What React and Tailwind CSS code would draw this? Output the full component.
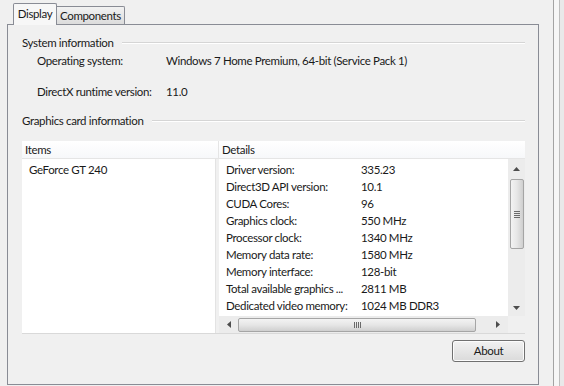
import React from "react";

const details = [
  ["Driver version:", "335.23"],
  ["Direct3D API version:", "10.1"],
  ["CUDA Cores:", "96"],
  ["Graphics clock:", "550 MHz"],
  ["Processor clock:", "1340 MHz"],
  ["Memory data rate:", "1580 MHz"],
  ["Memory interface:", "128-bit"],
  ["Total available graphics ...", "2811 MB"],
  ["Dedicated video memory:", "1024 MB DDR3"],
];

function GroupTitle({ children }) {
  return (
    <div className="flex h-[16px] items-center gap-[8px]">
      <span className="whitespace-nowrap">{children}</span>
      <div className="flex-1 border-t border-b border-t-[#d5d5d5] border-b-white" />
    </div>
  );
}

function Arrow({ dir }) {
  const paths = {
    up: "M0 4 L3.5 0 L7 4 Z",
    down: "M0 0 L7 0 L3.5 4 Z",
    left: "M4 0 L4 7 L0 3.5 Z",
    right: "M0 0 L4 3.5 L0 7 Z",
  };
  const vertical = dir === "up" || dir === "down";
  return (
    <svg width={vertical ? 7 : 4} height={vertical ? 4 : 7} viewBox={vertical ? "0 0 7 4" : "0 0 4 7"}>
      <path d={paths[dir]} fill="#4d4d4d" />
    </svg>
  );
}

export default function App() {
  return (
    <div className="flex h-[386px] w-[564px] overflow-hidden bg-[#f0f0f0] font-['Lato','Liberation_Sans',sans-serif] text-[11.5px] leading-none tracking-[-0.35px] text-[#1a1a1a]">
      {/* dialog body */}
      <div className="flex w-[553px] flex-col pl-[7px] pr-[14px]">
        {/* tabs */}
        <div className="relative z-10 flex h-[24px] items-end pl-[6px]">
          <div className="mb-[-1px] flex h-[22px] w-[44px] items-center justify-center rounded-t-[2px] border border-b-0 border-[#898c95] bg-[#f7f7f7] pb-[2px]">
            Display
          </div>
          <div className="flex h-[18px] w-[68px] items-center justify-center rounded-tr-[2px] border border-l-0 border-b-0 border-[#898c95] bg-gradient-to-b from-[#f2f2f2] to-[#dcdcdc]">
            Components
          </div>
        </div>

        {/* tab panel */}
        <div className="flex h-[361px] flex-col border border-[#898c95] bg-[#f0f0f0] pl-[14px] pr-[13px] pt-[10px]">
          <GroupTitle>System information</GroupTitle>
          <div className="mt-[2px] flex h-[16px] items-center pl-[15px]">
            <span className="w-[129px]">Operating system:</span>
            <span>Windows 7 Home Premium, 64-bit (Service Pack 1)</span>
          </div>
          <div className="mt-[15px] flex h-[16px] items-center pl-[15px]">
            <span className="w-[129px]">DirectX runtime version:</span>
            <span>11.0</span>
          </div>

          <div className="mt-[13px]">
            <GroupTitle>Graphics card information</GroupTitle>
          </div>

          {/* list views */}
          <div className="mt-[12px] flex h-[193px] flex-col border-b border-[#d9d9d9]">
            <div className="flex h-[18px] border-b border-[#e5e5e5] bg-gradient-to-b from-white to-[#f7f8fa]">
              <div className="flex w-[197px] items-center border-r border-[#e5e5e5] pl-[3px]">Items</div>
              <div className="flex flex-1 items-center pl-[3px]">Details</div>
            </div>
            <div className="flex min-h-0 flex-1">
              <div className="w-[193px] bg-white pl-[7px] pt-[4px]">
                <div className="flex h-[13px] items-center">GeForce GT 240</div>
              </div>
              <div className="w-[4px] border-l border-[#e3e3e3] bg-[#f0f0f0]" />
              <div className="flex flex-1 flex-col">
                <div className="flex min-h-0 flex-1">
                  <div className="flex-1 overflow-hidden bg-white pl-[7px] pt-[2px]">
                    {details.map(([k, v]) => (
                      <div key={k} className="flex h-[17px] items-center whitespace-nowrap">
                        <span className="w-[135px] shrink-0">{k}</span>
                        <span>{v}</span>
                      </div>
                    ))}
                  </div>
                  {/* vertical scrollbar */}
                  <div className="flex w-[17px] flex-col items-center bg-[#ececec]">
                    <div className="flex h-[20px] items-center justify-center">
                      <Arrow dir="up" />
                    </div>
                    <div className="flex h-[70px] w-[14px] items-center justify-center rounded-[2px] border border-[#a5a5a5] bg-gradient-to-r from-[#f3f3f3] via-[#e6e6e6] to-[#cfcfcf]">
                      <div className="flex flex-col gap-[1px]">
                        <div className="h-px w-[6px] bg-[#6a6a6a]" />
                        <div className="h-px w-[6px] bg-[#6a6a6a]" />
                        <div className="h-px w-[6px] bg-[#6a6a6a]" />
                        <div className="h-px w-[6px] bg-[#6a6a6a]" />
                      </div>
                    </div>
                    <div className="flex-1" />
                    <div className="flex h-[16px] items-center justify-center">
                      <Arrow dir="down" />
                    </div>
                  </div>
                </div>
                {/* horizontal scrollbar */}
                <div className="flex h-[17px]">
                  <div className="flex flex-1 items-center bg-[#ececec]">
                    <div className="flex w-[19px] items-center justify-center">
                      <Arrow dir="left" />
                    </div>
                    <div className="flex h-[14px] w-[238px] items-center justify-center rounded-[2px] border border-[#a5a5a5] bg-gradient-to-b from-[#f3f3f3] via-[#e6e6e6] to-[#cfcfcf]">
                      <div className="flex gap-[1px]">
                        <div className="h-[6px] w-px bg-[#6a6a6a]" />
                        <div className="h-[6px] w-px bg-[#6a6a6a]" />
                        <div className="h-[6px] w-px bg-[#6a6a6a]" />
                        <div className="h-[6px] w-px bg-[#6a6a6a]" />
                      </div>
                    </div>
                    <div className="flex-1" />
                    <div className="flex w-[20px] items-center justify-center">
                      <Arrow dir="right" />
                    </div>
                  </div>
                  <div className="w-[17px] bg-[#f0f0f0]" />
                </div>
              </div>
            </div>
          </div>

          <div className="mt-[6px] flex justify-end">
            <button className="flex h-[22px] w-[73px] items-center justify-center rounded-[3px] border border-[#707070] bg-gradient-to-b from-[#f2f2f2] to-[#dadada] text-[11.5px] text-[#1a1a1a] shadow-[inset_0_0_0_1px_#fcfcfc]">
              About
            </button>
          </div>
        </div>
      </div>

      {/* window frame edge */}
      <div className="w-px bg-[#a3a3a3]" />
      <div className="w-[5px] bg-[#f6f6f6]" />
      <div className="w-px bg-[#bdbdbd]" />
      <div className="flex-1 bg-[#e9e9e9]" />
    </div>
  );
}
